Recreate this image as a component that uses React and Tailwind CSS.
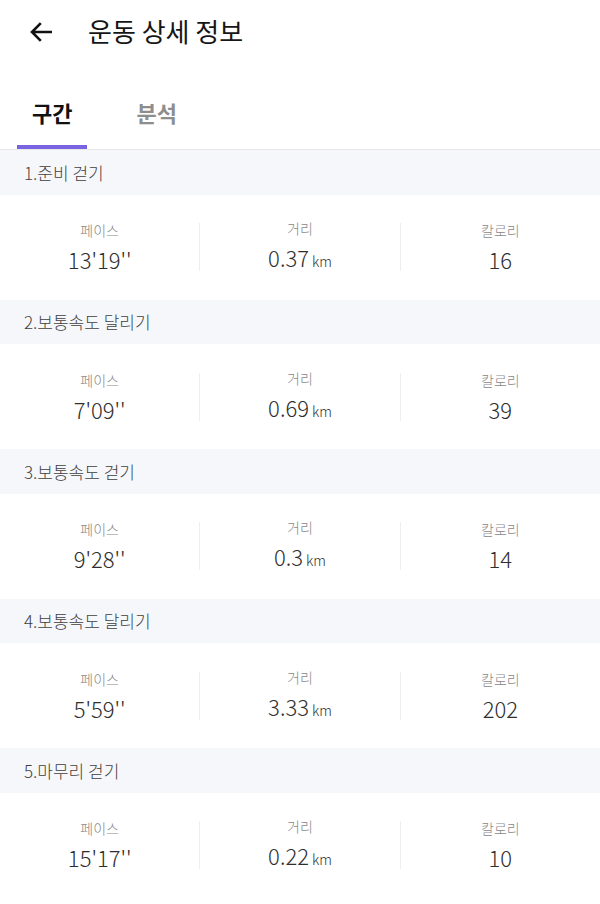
import React from "react";

const sections = [
  { title: "1.준비 걷기", pace: "13'19''", dist: "0.37", cal: "16" },
  { title: "2.보통속도 달리기", pace: "7'09''", dist: "0.69", cal: "39" },
  { title: "3.보통속도 걷기", pace: "9'28''", dist: "0.3", cal: "14" },
  { title: "4.보통속도 달리기", pace: "5'59''", dist: "3.33", cal: "202" },
  { title: "5.마무리 걷기", pace: "15'17''", dist: "0.22", cal: "10" },
];

function Stat({ label, children }) {
  return (
    <div className="flex-1 flex flex-col items-center">
      <div className="text-[14px] leading-[20px] font-light text-[#888888]">{label}</div>
      <div className="mt-[4px] text-[22px] leading-[30px] font-light text-[#2e2e2e]">{children}</div>
    </div>
  );
}

export default function App() {
  return (
    <div
      className="w-[600px] h-[904px] bg-white overflow-hidden"
      style={{ fontFamily: '"Noto Sans CJK KR", "Noto Sans", sans-serif' }}
    >
      <div className="h-[64px] flex items-center">
        <div className="w-[88px] pl-[29px] flex items-center">
          <svg width="24" height="22" viewBox="0 0 24 22" fill="none">
            <path
              d="M23 11H3M11.8 2.2L3 11L11.8 19.8"
              stroke="#111"
              strokeWidth="2.6"
            />
          </svg>
        </div>
        <div className="text-[26px] leading-[32px] -mt-[2px] text-[#161616]">운동 상세 정보</div>
      </div>
      <div className="h-[86px] flex items-end pl-[17px] gap-[34px] border-b border-[#e6e6e6]">
        <div className="px-[15px] h-full flex flex-col justify-end">
          <div className="text-[22px] leading-[28px] font-bold text-[#111]">구간</div>
          <div className="mt-[19px] h-[4px] -mx-[15px] bg-[#7a63e0]" />
        </div>
        <div className="px-[15px] h-full flex flex-col justify-end">
          <div className="text-[22px] leading-[28px] font-bold text-[#8e8e8e]">분석</div>
          <div className="mt-[19px] h-[4px]" />
        </div>
      </div>
      {sections.map((s) => (
        <div key={s.title}>
          <div className="h-[44.5px] bg-[#f6f7fb] flex items-center pl-[24px] text-[17px] font-light text-[#3f3f3f]">
            {s.title}
          </div>
          <div className="h-[105px] flex items-center">
            <Stat label="페이스">{s.pace}</Stat>
            <div className="w-px h-[48px] bg-[#eeeeee]" />
            <Stat label="거리">
              {s.dist}
              <span className="text-[14px] ml-[3px]">km</span>
            </Stat>
            <div className="w-px h-[48px] bg-[#eeeeee]" />
            <Stat label="칼로리">{s.cal}</Stat>
          </div>
        </div>
      ))}
    </div>
  );
}
